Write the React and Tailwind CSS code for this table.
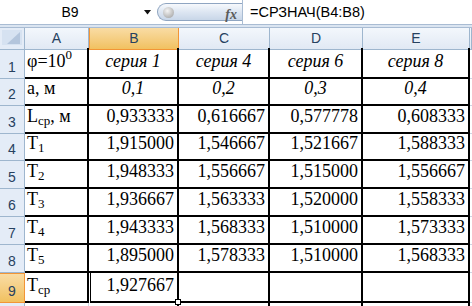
import React from 'react'

const COLS = 'grid-cols-[25px_64px_90px_91px_93px_107px_1fr]'
const ROW_H = ['h-[31px]', 'h-[27px]', 'h-[28px]', 'h-[27px]', 'h-[28px]', 'h-[28px]', 'h-[28px]', 'h-[28px]', 'h-[30px]']

const serif = { fontFamily: '"Liberation Serif", "Times New Roman", serif' }
const sans = { fontFamily: '"Liberation Sans", Arial, sans-serif' }

const Sub = ({ children }) => <sub className="text-[13px] relative top-[3px] align-baseline leading-none">{children}</sub>

const ROWS = [
  { a: <>φ=10<sup className="text-[13px] align-baseline relative -top-[8px] leading-none">0</sup></>, vals: ['серия 1', 'серия 4', 'серия 6', 'серия 8'], italic: true },
  { a: 'a, м', vals: ['0,1', '0,2', '0,3', '0,4'], italic: true },
  { a: <>L<Sub>ср</Sub>, м</>, vals: ['0,933333', '0,616667', '0,577778', '0,608333'] },
  { a: <>T<Sub>1</Sub></>, vals: ['1,915000', '1,546667', '1,521667', '1,588333'] },
  { a: <>T<Sub>2</Sub></>, vals: ['1,948333', '1,556667', '1,515000', '1,556667'] },
  { a: <>T<Sub>3</Sub></>, vals: ['1,936667', '1,563333', '1,520000', '1,558333'] },
  { a: <>T<Sub>4</Sub></>, vals: ['1,943333', '1,568333', '1,510000', '1,573333'] },
  { a: <>T<Sub>5</Sub></>, vals: ['1,895000', '1,578333', '1,510000', '1,568333'] },
  { a: <>T<Sub>ср</Sub></>, vals: ['1,927667', '', '', ''] },
]

const ColHead = ({ label, active }) => (
  <div
    className={
      active
        ? 'flex items-center justify-center border-x border-b border-[#f29536] bg-gradient-to-b from-[#f9dca4] to-[#f1c15f] text-[#27415f]'
        : 'flex items-center justify-center border-r border-b border-[#9eb6ce] bg-gradient-to-b from-[#f3f7fc] to-[#e1e9f4] text-[#27415f]'
    }
  >
    {label}
  </div>
)

const RowHead = ({ n, h, active }) => (
  <div
    className={
      `${h} flex items-end justify-center pb-[4px] text-[14px] text-[#27415f] ` +
      (active
        ? 'bg-gradient-to-b from-[#f9dca4] to-[#f1c15f] border-y border-r border-[#f29536]'
        : 'bg-[#e4ecf7] border-r border-b border-[#9eb6ce]')
    }
    style={sans}
  >
    {n}
  </div>
)

export default function App() {
  return (
    <div className="w-[472px] h-[306px] overflow-hidden bg-white">
      {/* formula bar */}
      <div className="flex h-[25px] border-b border-[#a9bcd3] bg-white text-[14px] text-black" style={sans}>
        <div className="w-[157px] flex items-center">
          <span className="w-[140px] text-center pt-[1px]">B9</span>
          <svg width="8" height="5" viewBox="0 0 8 5" className="ml-[4px]">
            <path d="M0 0 H7 L3.5 4.5 Z" fill="#111" />
          </svg>
        </div>
        <div className="my-[3px] w-[85px] relative rounded-l-full border border-r-0 border-[#8fa5c1] bg-gradient-to-b from-[#f7f9fc] via-[#dde6f2] to-[#c8d6e8]">
          <div className="absolute left-[5px] top-[3px] w-[11px] h-[11px] rounded-full bg-[radial-gradient(circle_at_40%_35%,#f4f4f4,#9a9a9a)]" />
          <span className="absolute right-[5px] top-[0px] italic font-bold text-[14px] text-[#5b5b5b]" style={serif}>fx</span>
        </div>
        <div className="flex-1 flex items-center pl-[7px] border-l border-[#a9bcd3] pt-[1px] text-[14.5px]">=СРЗНАЧ(B4:B8)</div>
      </div>
      <div className="h-[3px] bg-[#dbe5f1] border-b border-[#a9bcd3]" />

      {/* header row */}
      <div className={`grid ${COLS} h-[20px] text-[14px]`} style={sans}>
        <div className="relative bg-[#e4ecf7] border-r border-b border-[#9eb6ce]">
          <svg width="25" height="20" className="absolute inset-0">
            <rect x="2" y="2" width="20" height="15" fill="#d6e2f1" />
            <path d="M20 4 L20 16 L7 16 Z" fill="#b3c5dc" />
          </svg>
        </div>
        <ColHead label="A" />
        <ColHead label="B" active />
        <ColHead label="C" />
        <ColHead label="D" />
        <ColHead label="E" />
        <ColHead label="" />
      </div>

      {/* data rows */}
      {ROWS.map((r, i) => (
        <div key={i} className={`grid ${COLS} ${ROW_H[i]} text-[18px] text-black leading-none`} style={serif}>
          <RowHead n={i + 1} h={ROW_H[i]} active={i === 8} />
          <div className="flex items-end pl-[2px] pb-[7px] border-r-2 border-b-2 border-black">
            <span className="whitespace-nowrap">{r.a}</span>
          </div>
          {r.vals.map((v, j) =>
            i === 8 && j === 0 ? (
              <div key={j} className="relative flex items-end justify-end pr-[3px] pb-[7px] -mt-[1px] ml-[1px] border border-black border-b-2 border-r-2">
                {v}
                <div className="absolute -right-[4px] -bottom-[4px] w-[6px] h-[6px] bg-white border border-black" />
              </div>
            ) : (
              <div
                key={j}
                className={
                  'flex items-end pb-[7px] border-r-2 border-b-2 border-black ' +
                  (r.italic ? 'justify-center italic' : 'justify-end pr-[3px]')
                }
              >
                {v}
              </div>
            )
          )}
          <div className="border-b border-[#d0d7e5]" />
        </div>
      ))}

      {/* partial row 10 */}
      <div className={`grid ${COLS} h-[10px]`}>
        <div className="bg-[#e4ecf7] border-r border-[#9eb6ce]" />
        <div className="border-r border-[#d0d7e5]" />
        <div className="border-r-2 border-black" />
        <div className="border-r-2 border-black" />
        <div className="border-r-2 border-black" />
        <div className="border-r-2 border-black" />
        <div />
      </div>
    </div>
  )
}
